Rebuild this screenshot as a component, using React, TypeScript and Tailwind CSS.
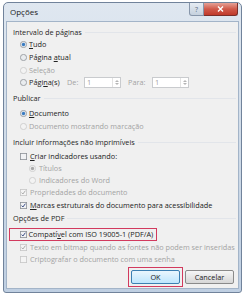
import type { ReactNode } from "react";

function Radio({ checked, disabled }: { checked?: boolean; disabled?: boolean }) {
  return (
    <svg width="7" height="7" viewBox="0 0 7 7" className="shrink-0">
      <circle
        cx="3.5"
        cy="3.5"
        r="3.1"
        fill={disabled ? "#f3f3f3" : "#e9ecef"}
        stroke={disabled ? "#c9c9c9" : "#8d9196"}
        strokeWidth="0.8"
      />
      {checked && (
        <circle cx="3.5" cy="3.5" r="1.7" fill={disabled ? "#a9a9a9" : "#3a7cc2"} />
      )}
    </svg>
  );
}

function Check({ checked, disabled }: { checked?: boolean; disabled?: boolean }) {
  return (
    <svg width="7" height="7" viewBox="0 0 7 7" className="shrink-0">
      <rect
        x="0.4"
        y="0.4"
        width="6.2"
        height="6.2"
        fill={disabled ? "#f4f4f4" : "#f1f2f4"}
        stroke={disabled ? "#c6c6c6" : "#8d9196"}
        strokeWidth="0.8"
      />
      {checked && (
        <path
          d="M1.6 3.6 L2.9 5 L5.4 1.7"
          fill="none"
          stroke={disabled ? "#ababab" : "#3c4f86"}
          strokeWidth="1"
        />
      )}
    </svg>
  );
}

function Header({ children, mt }: { children: ReactNode; mt: string }) {
  return (
    <div className={`${mt} h-[12px] flex items-center pl-[6px] pr-[2px] text-[#1e1e1e]`}>
      <span>{children}</span>
      <div className="flex-1 h-px bg-[#e2e5ea] ml-[3px]" />
    </div>
  );
}

function Row({
  children,
  mt = "",
  indent = "pl-[13px]",
  off,
}: {
  children: ReactNode;
  mt?: string;
  indent?: string;
  off?: boolean;
}) {
  return (
    <div
      className={`${mt} ${indent} h-[12px] flex items-center gap-[2px] ${
        off ? "text-[#a3a3a3]" : "text-[#222]"
      }`}
    >
      {children}
    </div>
  );
}

function Spin() {
  return (
    <div className="w-[37px] h-[11px] border border-[#c9cbce] bg-white flex">
      <span className="flex-1 pl-[2px] leading-[9px] text-[#a3a3a3]">1</span>
      <div className="w-[8px] flex flex-col items-center justify-center gap-[1px] border-l border-[#e3e3e3]">
        <svg width="4" height="2" viewBox="0 0 4 2">
          <path d="M0 2 L2 0 L4 2 Z" fill="#b5b5b5" />
        </svg>
        <svg width="4" height="2" viewBox="0 0 4 2">
          <path d="M0 0 L2 2 L4 0 Z" fill="#b5b5b5" />
        </svg>
      </div>
    </div>
  );
}

export default function App() {
  return (
    <div className="w-[247px] h-[300px] bg-white overflow-hidden pl-[3px] pt-[2px] font-['Open_Sans','Noto_Sans',sans-serif] text-[7.3px]">
      <div className="w-[239px] h-[291px] flex flex-col rounded-t-[5px] rounded-b-[3px] border border-[#71839b] bg-gradient-to-b from-[#dfe7f0] via-[#cfdbe8] to-[#bfcfe2]">
        {/* Title bar */}
        <div className="h-[18px] flex items-start">
          <span className="mt-[4px] ml-[6px] text-[8px] leading-[10px] text-[#1b1b1b]">
            Opções
          </span>
          <div className="ml-auto mr-[3px] flex">
            <div className="w-[15px] h-[13px] rounded-bl-[3px] border border-t-0 border-[#8796aa] bg-gradient-to-b from-[#e6ecf3] to-[#c5d1de] flex items-center justify-center text-[7px] leading-none text-[#5a6b80]">
              ?
            </div>
            <div className="w-[34px] h-[13px] rounded-br-[3px] border border-l-0 border-t-0 border-[#7a2f2a] bg-gradient-to-b from-[#e5a095] via-[#d0594a] to-[#c03a2b] flex items-center justify-center">
              <svg width="7" height="6" viewBox="0 0 7 6">
                <path d="M1 0.5 L6 5.5 M6 0.5 L1 5.5" stroke="#fff" strokeWidth="1.4" />
              </svg>
            </div>
          </div>
        </div>

        {/* Client area */}
        <div className="flex-1 mx-[2px] mb-[3px] bg-[#f0f0f0] border border-[#a3b4c8] flex flex-col">
          <Header mt="mt-[4px]">Intervalo de páginas</Header>
          <Row>
            <Radio checked />
            <span>
              <u>T</u>udo
            </span>
          </Row>
          <Row mt="mt-[1px]">
            <Radio />
            <span>
              Página <u>a</u>tual
            </span>
          </Row>
          <Row mt="mt-[1px]" off>
            <Radio disabled />
            <span>Seleção</span>
          </Row>
          <Row>
            <Radio />
            <span className="w-[36px]">
              Pági<u>n</u>a(s)
            </span>
            <span className="text-[#a3a3a3] w-[15px]">De:</span>
            <Spin />
            <span className="text-[#a3a3a3] ml-[5px] w-[22px]">Para:</span>
            <Spin />
          </Row>

          <Header mt="mt-[4px]">Publicar</Header>
          <Row mt="mt-[3px]">
            <Radio checked />
            <span>
              <u>D</u>ocumento
            </span>
          </Row>
          <Row mt="mt-[1px]" off>
            <Radio disabled />
            <span>Documento mostrando marcação</span>
          </Row>

          <Header mt="mt-[4px]">Incluir informações não imprimíveis</Header>
          <Row mt="mt-[2px]">
            <Check />
            <span className="ml-[1px]">
              <u>C</u>riar indicadores usando:
            </span>
          </Row>
          <Row indent="pl-[22px]" off>
            <Radio checked disabled />
            <span className="ml-[1px]">Títulos</span>
          </Row>
          <Row indent="pl-[22px]" off>
            <Radio disabled />
            <span className="ml-[1px]">Indicadores do Word</span>
          </Row>
          <Row off>
            <Check checked disabled />
            <span className="ml-[1px]">Propriedades do documento</span>
          </Row>
          <Row mt="mt-[1px]">
            <Check checked />
            <span className="ml-[1px]">
              <u>M</u>arcas estruturais do documento para acessibilidade
            </span>
          </Row>

          <Header mt="mt-[1px]">Opções de PDF</Header>
          <div className="mt-[4px] ml-[2px] w-fit h-[13px] flex items-center gap-[2px] border-[1.5px] border-[#d23a5e] pl-[9.5px] pr-[3px] text-[#222]">
            <Check checked />
            <span>
              Compatí<u>v</u>el com ISO 19005-1 (PDF/A)
            </span>
          </div>
          <Row off>
            <Check checked disabled />
            <span className="ml-[1px]">Texto em bitmap quando as fontes não podem ser inseridas</span>
          </Row>
          <Row off>
            <Check disabled />
            <span className="ml-[1px]">Criptografar o documento com uma senha</span>
          </Row>

          <div className="mt-[2px] flex items-center justify-end gap-[2px] pr-[4px]">
            <div className="border-[1.5px] border-[#d23a5e] p-[2px]">
              <div className="w-[49px] h-[14px] rounded-[2px] border border-[#3c7fb1] bg-gradient-to-b from-[#eaf6fd] to-[#bee6fd] flex items-center justify-center text-[#222]">
                OK
              </div>
            </div>
            <div className="w-[49px] h-[14px] rounded-[2px] border border-[#8a8a8a] bg-gradient-to-b from-[#f6f6f6] via-[#e6e6e6] to-[#d6d6d6] flex items-center justify-center text-[#222]">
              Cancelar
            </div>
          </div>
        </div>
      </div>
    </div>
  );
}
